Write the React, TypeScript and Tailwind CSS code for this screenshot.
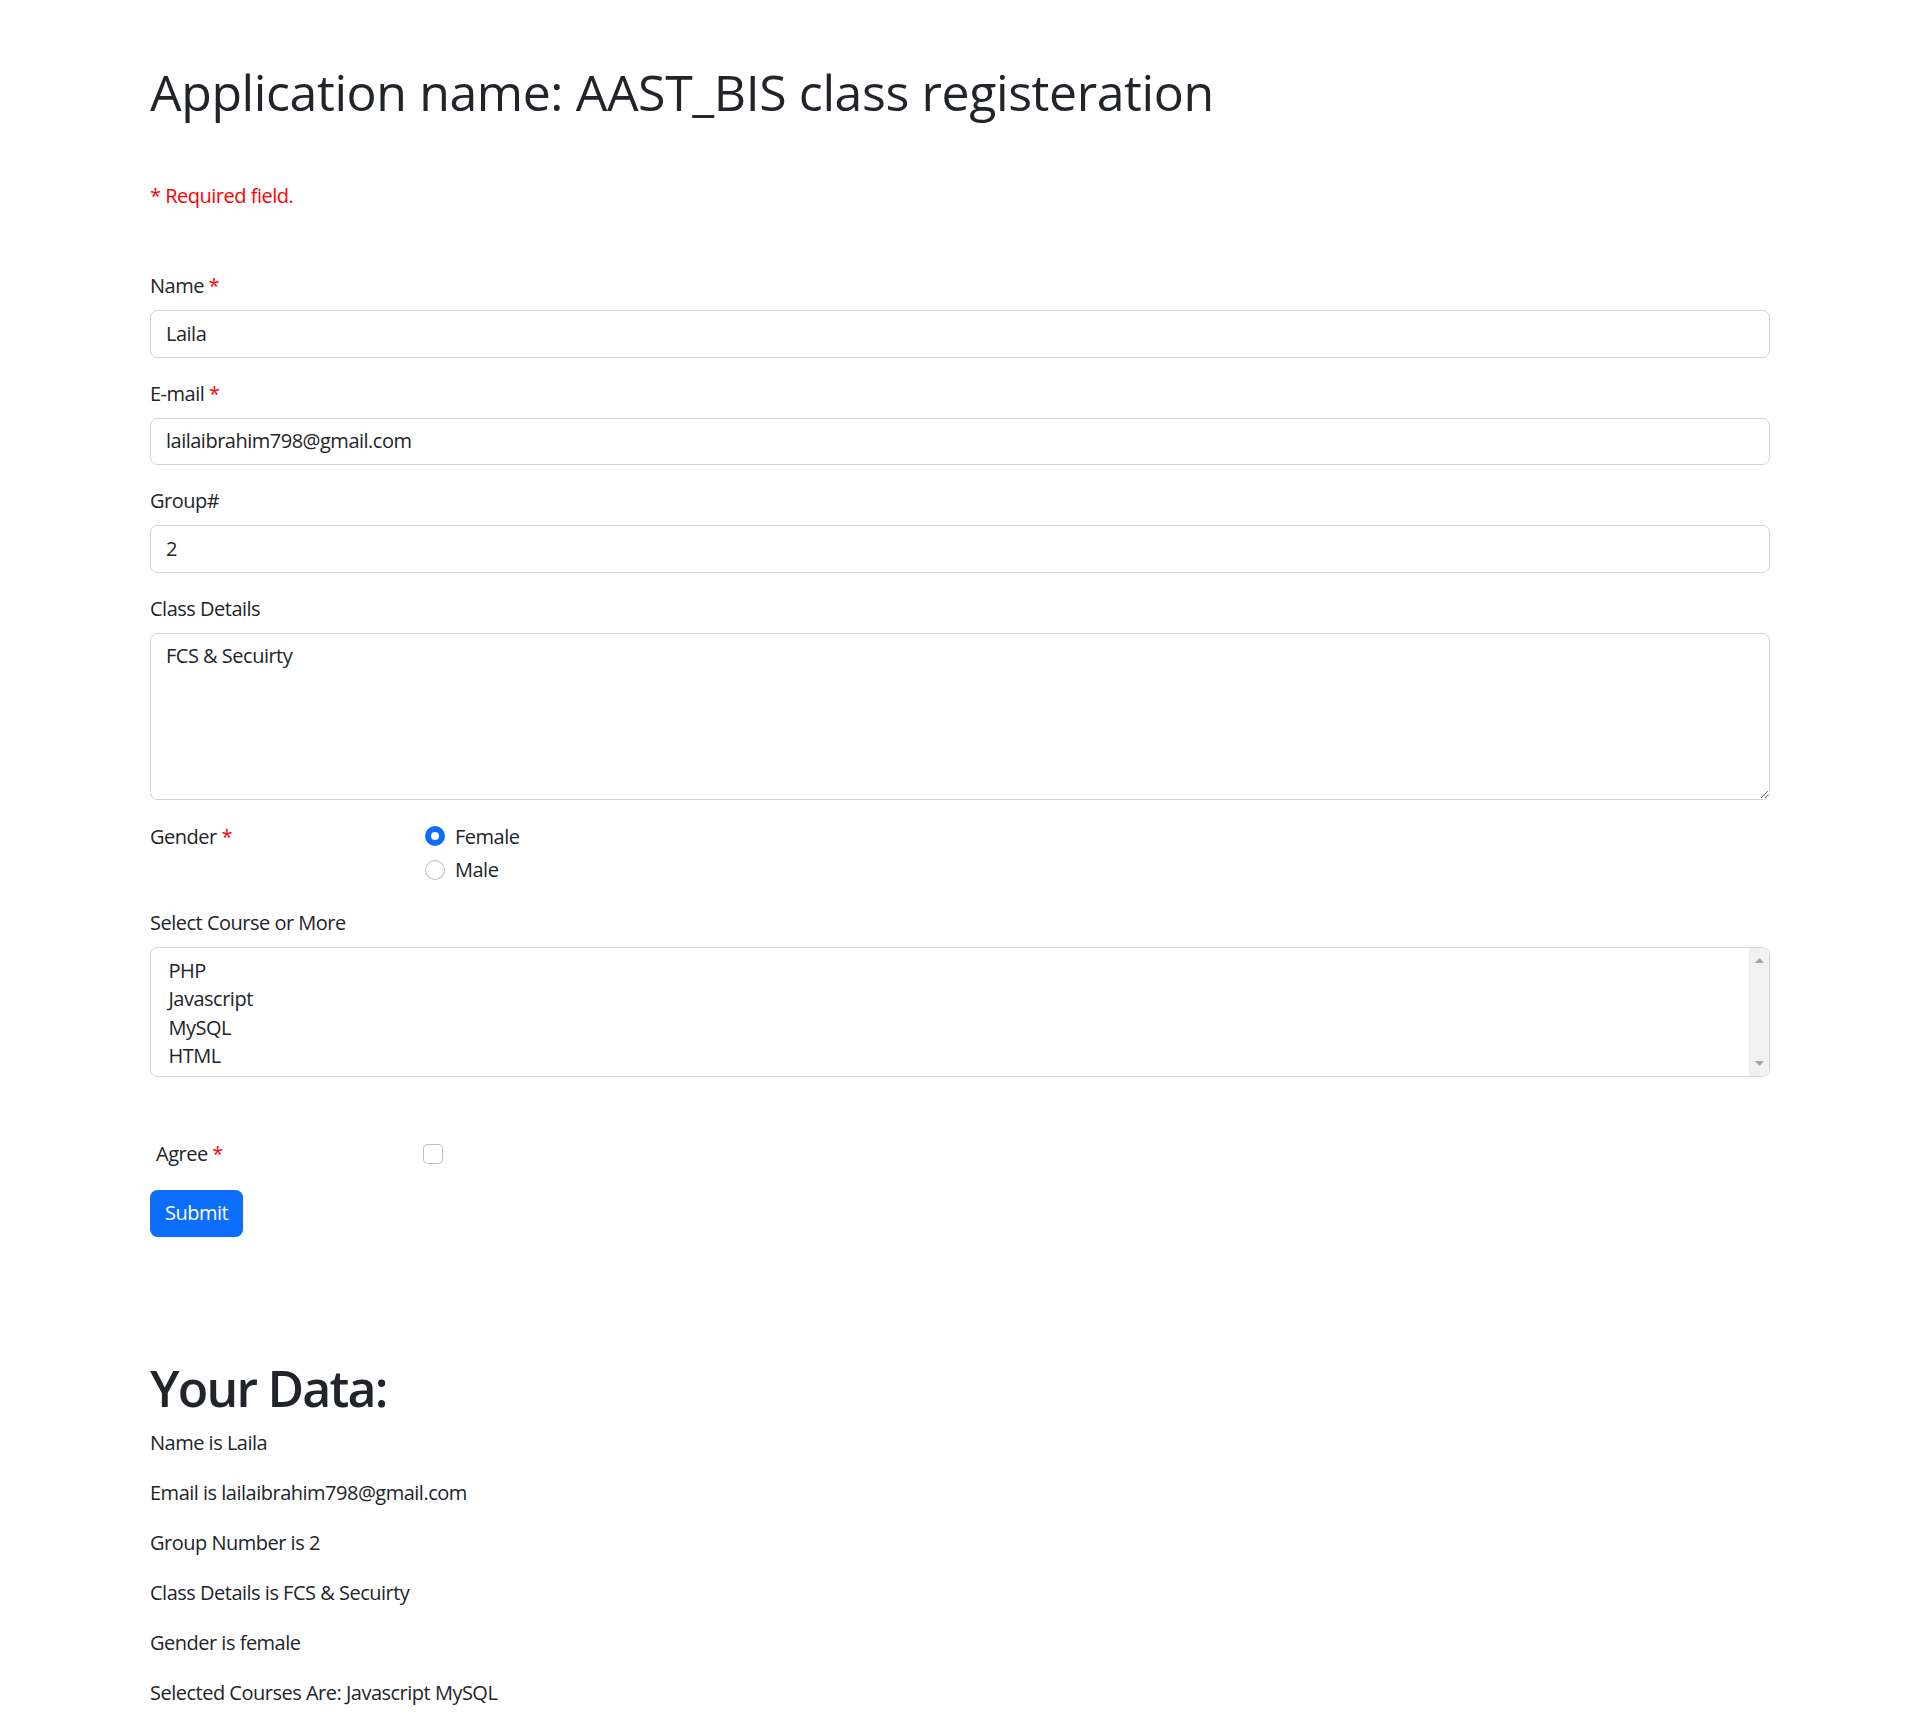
import React from "react";

function Req() {
  return <span className="text-[#ff0000]"> *</span>;
}

function Field({ label, required, value }: { label: string; required?: boolean; value: string }) {
  return (
    <div className="mb-[20px]">
      <div className="h-[30px] mb-[10px] pt-[1px]">
        {label}
        {required && <Req />}
      </div>
      <div className="h-[47.5px] border-[1.25px] border-[#ced4da] rounded-[7.5px] px-[15px] flex items-center bg-white">
        {value}
      </div>
    </div>
  );
}

export default function App() {
  const courses = ["PHP", "Javascript", "MySQL", "HTML"];
  return (
    <div className="min-h-[1726px] bg-white text-[#212529] font-['Open_Sans',sans-serif] text-[20px] leading-[30px] tracking-[-0.5px]">
      <div className="w-[1620px] mx-auto pt-[62px]">
        <h1 className="text-[50px] leading-[60px] font-normal tracking-[-0.4px] mb-[58px]">
          Application name: AAST_BIS class registeration
        </h1>
        <p className="text-[#ff0000] mb-[59px] pt-[1px]">* Required field.</p>

        <Field label="Name" required value="Laila" />
        <Field label="E-mail" required value="lailaibrahim798@gmail.com" />
        <Field label="Group#" value="2" />

        <div className="mb-[20px]">
          <div className="h-[30px] mb-[10px] pt-[1px]">Class Details</div>
          <textarea
            readOnly
            rows={5}
            defaultValue="FCS & Secuirty"
            className="block w-full h-[167.5px] border-[1.25px] border-[#ced4da] rounded-[7.5px] px-[15px] py-[7.5px] text-[20px] leading-[30px] tracking-[-0.5px] text-[#212529] resize-y outline-none font-['Open_Sans',sans-serif]"
          />
        </div>

        <div className="flex mb-[22px] pt-[1px]">
          <div className="w-[275px] h-[30px] pt-[1px]">
            Gender
            <Req />
          </div>
          <div className="flex flex-col gap-[3.5px]">
            <div className="flex items-center h-[30px]">
              <span className="w-[20px] h-[20px] rounded-full bg-[#0d6efd] flex items-center justify-center">
                <span className="w-[8px] h-[8px] rounded-full bg-white" />
              </span>
              <span className="ml-[10px] pt-[1px]">Female</span>
            </div>
            <div className="flex items-center h-[30px]">
              <span className="w-[20px] h-[20px] rounded-full border-[1.25px] border-[rgba(0,0,0,0.25)] bg-white" />
              <span className="ml-[10px] pt-[1px]">Male</span>
            </div>
          </div>
        </div>

        <div className="h-[30px] mb-[10px] pt-[1px]">Select Course or More</div>
        <div className="h-[130px] border-[1.25px] border-[#ced4da] rounded-[7.5px] flex overflow-hidden bg-white">
          <div className="flex-1 pt-[9.5px] pl-[17.5px]">
            {courses.map((c) => (
              <div key={c} className="h-[28.4px] leading-[28.4px]">
                {c}
              </div>
            ))}
          </div>
          <div className="w-[20px] bg-[#f1f1f1] flex flex-col items-center justify-between py-[10px]">
            <svg width="9" height="5" viewBox="0 0 9 5">
              <path d="M0 5 L4.5 0 L9 5 Z" fill="#a3a3a3" />
            </svg>
            <svg width="9" height="5" viewBox="0 0 9 5">
              <path d="M0 0 L4.5 5 L9 0 Z" fill="#a3a3a3" />
            </svg>
          </div>
        </div>

        <div className="flex items-center h-[30px] mt-[62px] mb-[21px]">
          <div className="w-[273px] pl-[6px] pt-[1px]">
            Agree
            <Req />
          </div>
          <span className="w-[20px] h-[20px] rounded-[5px] border-[1.25px] border-[rgba(0,0,0,0.25)] bg-white" />
        </div>

        <button className="h-[47.5px] px-[15px] rounded-[7.5px] bg-[#0d6efd] text-white text-[20px] leading-[30px] tracking-[-0.5px] font-['Open_Sans',sans-serif]">
          Submit
        </button>

        <h1 className="mt-[121px] text-[50px] leading-[60px] font-semibold tracking-[-1.8px] mb-[10px]">Your Data:</h1>
        <p className="mb-[20px]">Name is Laila</p>
        <p className="mb-[20px]">Email is lailaibrahim798@gmail.com</p>
        <p className="mb-[20px]">Group Number is 2</p>
        <p className="mb-[20px]">Class Details is FCS &amp; Secuirty</p>
        <p className="mb-[20px]">Gender is female</p>
        <p className="mb-[20px]">Selected Courses Are: Javascript MySQL</p>
      </div>
    </div>
  );
}
